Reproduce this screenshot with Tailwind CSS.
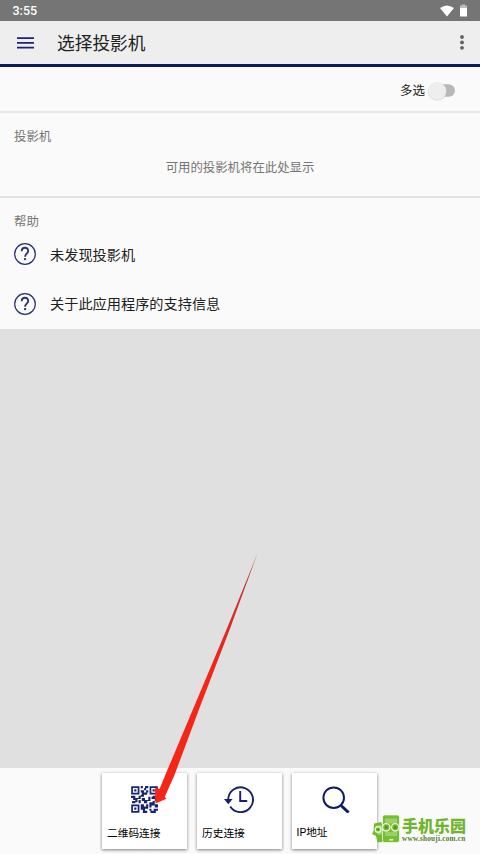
<!DOCTYPE html>
<html lang="zh-CN">
<head>
<meta charset="utf-8">
<title>选择投影机</title>
<script src="https://cdn.jsdelivr.net/npm/@tailwindcss/browser@4"></script>
</head>
<body class="bg-[#e0e0e0]">
<div class="relative flex h-[854px] w-[480px] flex-col overflow-hidden font-['Noto_Sans_CJK_SC',sans-serif] text-[#212121]">
  <div class="flex h-[21px] shrink-0 items-center bg-[#757575] pl-[12.5px] pr-[13px] font-[Roboto,sans-serif] text-[12.5px] font-medium leading-none text-white">
    <span class="mt-[2px]">3:55</span>
    <svg class="ml-auto h-[12px] w-[14px]" viewBox="0 0 14 12" fill="#fff"><path d="M0 3Q7-2 14 3L7 11.5Z"/></svg>
    <svg class="ml-[6px] h-[13px] w-[7px]" viewBox="0 0 7 13"><path d="M0 1.5h2V.5h3v1h2V5H0Z" fill="#bdbdbd"/><path d="M0 4h7v8.5H0Z" fill="#fff"/></svg>
  </div>
  <header class="flex h-[46px] shrink-0 items-center border-b-[3px] border-[#0c1a5e] bg-[#eeeeee] pl-[17px] pr-[16px]">
    <svg class="h-[12px] w-[17px]" viewBox="0 0 17 12" fill="#1b2470"><path d="M0 .3h17v1.8H0ZM0 5h17v1.8H0ZM0 9.8h17v1.8H0Z"/></svg>
    <h1 class="ml-[23px] text-[17.7px] leading-none">选择投影机</h1>
    <svg class="ml-auto h-[15px] w-[4px]" viewBox="0 0 4 15" fill="#616161"><circle cx="2" cy="2" r="1.9"/><circle cx="2" cy="7.4" r="1.9"/><circle cx="2" cy="12.8" r="1.9"/></svg>
  </header>
  <div class="flex h-[46px] shrink-0 items-center justify-end border-b-2 border-[#e7e7e7] bg-[#fafafa] pr-[24px] pt-[3px]">
    <span class="text-[12.5px] leading-none">多选</span>
    <svg class="ml-[3px] h-[22px] w-[28px]" viewBox="0 0 28 22"><rect x="6" y="4.3" width="21" height="12.5" rx="6.25" fill="#b8b8b8"/><circle cx="9.2" cy="11.5" r="9.2" fill="#dadada"/><circle cx="9.2" cy="11" r="8.8" fill="#eeeeee"/></svg>
  </div>
  <section class="flex h-[85px] shrink-0 flex-col border-b-2 border-[#e2e2e2] bg-[#fafafa] pt-[16px] text-[12.4px] leading-[14px] text-[#757575]">
    <h2 class="pl-[14px]">投影机</h2>
    <p class="mt-[17px] text-center">可用的投影机将在此处显示</p>
  </section>
  <section class="h-[131px] shrink-0 bg-[#fafafa] pl-[14px] pt-[16px]">
    <h2 class="text-[12.4px] leading-[14px] text-[#757575]">帮助</h2>
    <div class="mt-[1px] flex h-[50px] items-center">
      <svg class="h-[22px] w-[22px]" viewBox="0 0 22 22" fill="none" stroke="#28306f"><circle cx="11" cy="11" r="10.3" stroke-width="1.2"/><path d="M7.7 8.3C7.7 3.6 14.3 3.6 14.2 8C14.1 10.6 11.1 10.9 11.1 13.8" stroke-width="1.8"/><path d="M11.1 15.1v2" stroke-width="2"/></svg>
      <span class="ml-[14px] text-[14.2px] leading-none">未发现投影机</span>
    </div>
    <div class="flex h-[49px] items-center">
      <svg class="h-[22px] w-[22px]" viewBox="0 0 22 22" fill="none" stroke="#28306f"><circle cx="11" cy="11" r="10.3" stroke-width="1.2"/><path d="M7.7 8.3C7.7 3.6 14.3 3.6 14.2 8C14.1 10.6 11.1 10.9 11.1 13.8" stroke-width="1.8"/><path d="M11.1 15.1v2" stroke-width="2"/></svg>
      <span class="ml-[14px] text-[14.2px] leading-none">关于此应用程序的支持信息</span>
    </div>
  </section>
  <main class="grow bg-[#e0e0e0]"></main>
  <nav class="flex h-[86px] shrink-0 justify-center gap-[10px] bg-[#fafafa] pr-[2px] pt-[5px] text-[10.7px] leading-none text-black">
    <div class="flex h-[76px] w-[85px] flex-col bg-white pl-[5px] pt-[13px] shadow-[0_1px_3px_rgba(0,0,0,0.5)]">
      <svg class="ml-[24px] h-[27px] w-[27px]" viewBox="0 0 25 25" fill="none" stroke="#18246e">
        <path d="M1 1h6v6H1ZM18 1h6v6h-6ZM1 18h6v6H1Z" stroke-width="1.6"/>
        <path d="M3 3h2v2H3ZM20 3h2v2h-2ZM3 20h2v2H3Z" fill="#18246e" stroke="none"/>
        <path d="M9 0h2v2H9ZM13 0h3v2h-2v2h-2V2h1ZM9 4h3v2h3v2h-3v2H9V8h1V6H9ZM14 4h2v2h-2ZM0 9h4v2h3V9h2v3H6v3H4v-2H2v-2H0ZM1 14h3v2H1ZM10 11h3v2h3v-3h2v4h-3v2h-3v-2h-2ZM20 9h3v2h2v3h-3v-2h-3v-2h1ZM7 13h2v3H7ZM17 15h3v-1h2v3h3v3h-3v-2h-3v2h-2ZM9 17h3v2h2v-2h2v4h-3v2h2v2h-4v-3H9ZM17 21h2v2h2v-2h4v2h-2v2h-5v-2h-1Z" fill="#18246e" stroke="none"/>
      </svg>
      <span class="ml-[0.5px] mt-[15px]">二维码连接</span>
    </div>
    <div class="flex h-[76px] w-[85px] flex-col bg-white pl-[5px] pt-[13px] shadow-[0_1px_3px_rgba(0,0,0,0.5)]">
      <svg class="ml-[22px] h-[27px] w-[30px]" viewBox="0 0 30 27" fill="none" stroke="#18206d"><path d="M4.2 13.5A12.4 12.4 0 1 1 6.2 20.5" stroke-width="1.9"/><path d="M16.2 5v10h7" stroke-width="1.9"/><path d="M0 13h8.6L4.3 18.2Z" fill="#18206d" stroke="none"/></svg>
      <span class="ml-[0.5px] mt-[15px]">历史连接</span>
    </div>
    <div class="flex h-[76px] w-[85px] flex-col bg-white pl-[5px] pt-[13px] shadow-[0_1px_3px_rgba(0,0,0,0.5)]">
      <svg class="ml-[25px] h-[27px] w-[28px]" viewBox="0 0 28 27" fill="none" stroke="#101b66"><circle cx="11.7" cy="11.7" r="10.3" stroke-width="2"/><path d="M18.7 19.2L20 20.5" stroke-width="2"/><path d="M19.6 20l7 6.5" stroke-width="3"/></svg>
      <span class="mt-[15px] font-[Roboto,'Noto_Sans_CJK_SC',sans-serif] text-[10.7px] leading-none">IP地址</span>
    </div>
  </nav>

  <!-- pointer towards the QR card -->
  <svg class="pointer-events-none absolute left-[150px] top-[550px] h-[260px] w-[112px]" viewBox="150 550 112 260"><defs><linearGradient id="shaft" x1="0" y1="0" x2="0" y2="1"><stop offset="0" stop-color="#a83b38"/><stop offset=".3" stop-color="#df2a20"/><stop offset=".5" stop-color="#f52518"/></linearGradient></defs><path d="M257.5 553.5L229.5 630 199.5 708 174.5 775 164.7 797 166.5 798.8 155.5 803.5 155 788.3 159.5 789 165.3 775 193.5 708 226.3 630Z" fill="url(#shaft)"/></svg>

  <!-- site badge -->
  <div class="absolute left-[371px] top-[814px] flex">
    <svg class="h-[30px] w-[30px]" viewBox="0 0 30 30" fill="none">
      <path d="M3 9.5L10.5 8 14 27.5 6.5 28.5 5 22 1 20 2.5 17Z" fill="#75b931"/>
      <path d="M4.5 12l6-1 1.5 9-5 1Z" fill="#a5d377"/>
      <rect x="11.5" y="1" width="17" height="27.5" rx="2.2" fill="#76bd30" stroke="#fafafa" stroke-width=".7"/>
      <path d="M14 4.5h12v5H14ZM14 18h12v4H14Z" fill="#9bcf68"/>
      <g fill="#72b52f" stroke="#e4f2d6" stroke-width="1.4"><circle cx="7" cy="15.5" r="2.8"/><circle cx="15.2" cy="13.3" r="3.7"/><circle cx="24.2" cy="13.3" r="3.7"/></g>
      <g fill="#4c9a20"><circle cx="15.2" cy="13.3" r="1.5"/><circle cx="24.2" cy="13.3" r="1.5"/><circle cx="7" cy="15.5" r="1.1"/></g>
      <path d="M18.2 25.7h4" stroke="#edf7e3" stroke-width="1.6"/>
    </svg>
    <div class="ml-[1px] flex flex-col pt-[3px]">
      <span class="whitespace-nowrap text-[16px] font-black leading-[16px] text-[#70b52f]">手机乐园</span>
      <span class="mt-[2px] whitespace-nowrap font-['Liberation_Serif',serif] text-[7.2px] tracking-[0.25px] font-bold leading-[8px] text-[#4f7f31]">www.shouji.com.cn</span>
    </div>
  </div>
</div>
</body>
</html>
